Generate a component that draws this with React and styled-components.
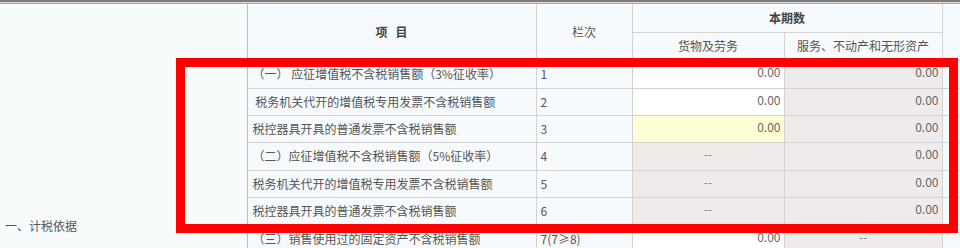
import React from 'react';
import styled, { createGlobalStyle } from 'styled-components';

const GlobalStyle = createGlobalStyle`
  html, body {
    margin: 0;
    padding: 0;
    background: #f8fbfc;
    overflow: hidden;
  }
  body {
    font-family: "Noto Sans CJK SC", "Noto Sans", sans-serif;
    font-size: 12px;
    color: #555;
  }
`;

const columns = [247, 289, 96, 152, 158, 60];

const rows = [
  { name: '（一） 应征增值税不含税销售额（3%征收率）', no: '1', goods: '0.00', goodsKind: 'white', service: '0.00', serviceKind: 'grey', h: 28 },
  { name: '\u00a0税务机关代开的增值税专用发票不含税销售额', no: '2', goods: '0.00', goodsKind: 'white', service: '0.00', serviceKind: 'grey', h: 27 },
  { name: '税控器具开具的普通发票不含税销售额', no: '3', goods: '0.00', goodsKind: 'yellow', service: '0.00', serviceKind: 'grey', h: 27 },
  { name: '（二）应征增值税不含税销售额（5%征收率）', no: '4', goods: '--', goodsKind: 'grey', service: '0.00', serviceKind: 'grey', h: 28 },
  { name: '税务机关代开的增值税专用发票不含税销售额', no: '5', goods: '--', goodsKind: 'grey', service: '0.00', serviceKind: 'grey', h: 27 },
  { name: '税控器具开具的普通发票不含税销售额', no: '6', goods: '--', goodsKind: 'grey', service: '0.00', serviceKind: 'grey', h: 28 },
  { name: '（三）销售使用过的固定资产不含税销售额', no: '7(7≥8)', goods: '0.00', goodsKind: 'white', service: '--', serviceKind: 'grey', h: 28 },
];

const cellBg = {
  white: '#ffffff',
  yellow: '#ffffd6',
  grey: '#efebeb',
};

function App() {
  return (
    <Page>
      <GlobalStyle />
      <TopRule />
      <Sheet>
        <colgroup>
          {columns.map((w, i) => (
            <Col key={i} $w={w} />
          ))}
        </colgroup>
        <tbody>
          <Row $h={28}>
            <SideCell rowSpan={9}>一、计税依据</SideCell>
            <HeadCell rowSpan={2} $bold>项&nbsp;&nbsp;&nbsp;目</HeadCell>
            <HeadCell rowSpan={2}>栏次</HeadCell>
            <HeadCell colSpan={2} $bold>本期数</HeadCell>
            <HeadCell rowSpan={2} />
          </Row>
          <Row $h={28}>
            <HeadCell>货物及劳务</HeadCell>
            <HeadCell>服务、不动产和无形资产</HeadCell>
          </Row>
          {rows.map((r) => (
            <Row key={r.no} $h={r.h}>
              <NameCell>{r.name}</NameCell>
              <NoCell>{r.no}</NoCell>
              <ValueCell $kind={r.goodsKind} $dash={r.goods === '--'}>
                {r.goods}
              </ValueCell>
              <ValueCell $kind={r.serviceKind} $dash={r.service === '--'}>
                {r.service}
              </ValueCell>
              <ExtraCell />
            </Row>
          ))}
        </tbody>
      </Sheet>
      <Highlight />
    </Page>
  );
}

const Page = styled.div`
  position: relative;
  width: 960px;
  height: 248px;
  overflow: hidden;
`;

const TopRule = styled.div`
  height: 1px;
  border-top: 2px solid #7c7c7c;
  border-bottom: 1px solid #a9a9a9;
  background: #dcdcdc;
`;

const Sheet = styled.table`
  table-layout: fixed;
  border-collapse: collapse;
  width: 1002px;
  line-height: 16px;
`;

const Col = styled.col`
  width: ${({ $w }) => $w}px;
`;

const Row = styled.tr`
  height: ${({ $h }) => $h}px;
`;

const SideCell = styled.td`
  vertical-align: top;
  padding: 214px 0 0 5px;
  background: #f8fbfc;
  border-right: 1px solid #bdbdbd;
  white-space: nowrap;
`;

const HeadCell = styled.td`
  background: #f7fafc;
  border: 1px solid #d2d2d2;
  border-top: none;
  text-align: center;
  padding: 0;
  color: ${({ $bold }) => ($bold ? '#444' : '#555')};
  font-weight: ${({ $bold }) => ($bold ? 'bold' : 'normal')};
`;

const NameCell = styled.td`
  background: #f7fafc;
  border: 1px solid #d2d2d2;
  padding: 0 0 0 5px;
  white-space: nowrap;
  overflow: hidden;
`;

const NoCell = styled.td`
  background: #f7fafc;
  border: 1px solid #d2d2d2;
  padding: 0 0 0 4px;
  white-space: nowrap;
`;

const ValueCell = styled.td`
  background: ${({ $kind }) => cellBg[$kind]};
  border: 1px solid #d2d2d2;
  vertical-align: top;
  padding: 3px 3px 0 3px;
  text-align: ${({ $dash }) => ($dash ? 'center' : 'right')};
  color: ${({ $dash }) => ($dash ? '#888' : '#666')};
`;

const ExtraCell = styled.td`
  background: #f7fafc;
  border: 1px solid #d2d2d2;
`;

const Highlight = styled.div`
  position: absolute;
  left: 176px;
  top: 58px;
  width: 782px;
  height: 175px;
  box-sizing: border-box;
  border: 9px solid #ff0000;
  pointer-events: none;
`;

export default App;
